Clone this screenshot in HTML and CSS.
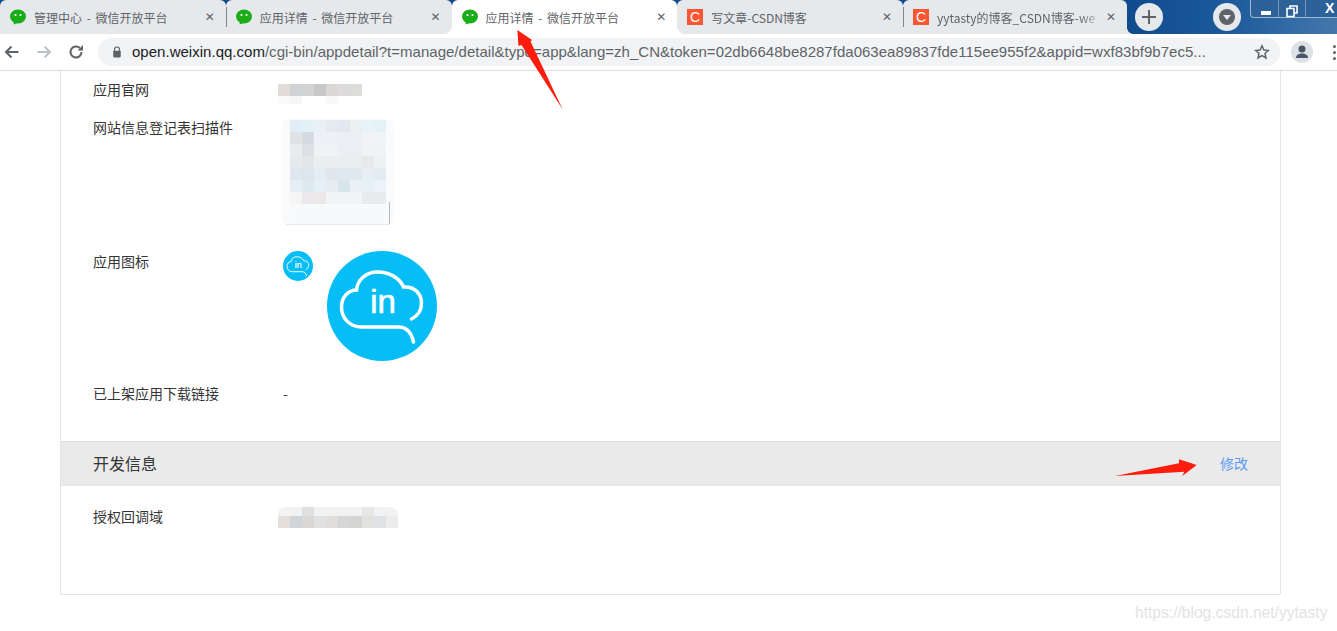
FILE: index.html
```html
<!DOCTYPE html>
<html lang="zh-CN">
<head>
<meta charset="utf-8">
<title>应用详情 - 微信开放平台</title>
<link rel="stylesheet" href="styles.css">
</head>
<body>
<header class="chrome">
  <div class="tabstrip">
    <div class="tab">
      <svg class="fav" viewBox="0 0 16 16"><use href="#wechat"/></svg>
      <span class="tab-title">管理中心 - 微信开放平台</span><span class="close">✕</span>
    </div>
    <div class="tab sep before-active">
      <svg class="fav" viewBox="0 0 16 16"><use href="#wechat"/></svg>
      <span class="tab-title">应用详情 - 微信开放平台</span><span class="close">✕</span>
    </div>
    <div class="tab active">
      <svg class="fav" viewBox="0 0 16 16"><use href="#wechat"/></svg>
      <span class="tab-title">应用详情 - 微信开放平台</span><span class="close">✕</span>
    </div>
    <div class="tab after-active">
      <svg class="fav" viewBox="0 0 16 16"><use href="#csdn"/></svg>
      <span class="tab-title">写文章-CSDN博客</span><span class="close">✕</span>
    </div>
    <div class="tab sep last">
      <svg class="fav" viewBox="0 0 16 16"><use href="#csdn"/></svg>
      <span class="tab-title fade">yytasty的博客_CSDN博客-we</span><span class="close">✕</span>
    </div>
    <div class="newtab"><svg viewBox="0 0 28 28" width="28" height="28"><path d="M14 7v14M7 14h14" stroke="#5f6368" stroke-width="2" fill="none"/></svg></div>
    <div class="profile"><svg viewBox="0 0 28 28" width="28" height="28"><circle cx="14" cy="14" r="14" fill="#e6e9ec"/><circle cx="14" cy="14" r="8" fill="#5f6368"/><path d="M10 12h8l-4 5z" fill="#e6e9ec"/></svg></div>
    <div class="winbtns">
      <span class="winbtn"><svg viewBox="0 0 28 16" width="28" height="16"><rect x="10" y="8" width="10" height="4" fill="#fff"/></svg></span>
      <span class="winbtn"><svg viewBox="0 0 27 16" width="27" height="16"><path d="M11 5V3h7v7h-3M8 5.500h7v8H8z" fill="none" stroke="#fff" stroke-width="1.600"/></svg></span>
      <span class="winbtn wide"><span class="x">X</span></span>
    </div>
  </div>
  <div class="toolbar">
    <svg class="navicon" viewBox="0 0 16 16"><path d="M14.500 8H2M7.500 2.500 2 8l5.500 5.500" fill="none" stroke="#5f6368" stroke-width="2"/></svg>
    <svg class="navicon off" viewBox="0 0 16 16"><path d="M1.500 8H14M8.500 2.500 14 8l-5.500 5.500" fill="none" stroke="#bdc1c6" stroke-width="2"/></svg>
    <svg class="navicon" viewBox="0 0 16 16"><path d="M13.500 8A5.500 5.500 0 1 1 11.800 4" fill="none" stroke="#5f6368" stroke-width="2"/><path d="M9.500 6.500H15V1z" fill="#5f6368"/></svg>
    <div class="omnibox">
      <svg class="lock" viewBox="0 0 12 14"><path d="M3 6V4a3 3 0 0 1 6 0v2" fill="none" stroke="#5f6368" stroke-width="1.400"/><rect x="1.500" y="5.500" width="9" height="8" rx="1" fill="#5f6368"/></svg>
      <span class="url"><b>open.weixin.qq.com</b>/cgi-bin/appdetail?t=manage/detail&amp;type=app&amp;lang=zh_CN&amp;token=02db6648be8287fda063ea89837fde115ee955f2&amp;appid=wxf83bf9b7ec5...</span>
      <svg class="star" viewBox="0 0 16 16"><path d="m8 1.800 1.900 4.200 4.500.5-3.400 3 1 4.500L8 11.700 4 14l1-4.500-3.400-3 4.500-.5z" fill="none" stroke="#5f6368" stroke-width="1.500"/></svg>
    </div>
    <svg class="avatar" viewBox="0 0 22 22"><circle cx="11" cy="11" r="11" fill="#dee1e6"/><circle cx="11" cy="8" r="3.500" fill="#4a5568"/><path d="M5 17c0-3 2.500-4.500 6-4.500s6 1.500 6 4.500z" fill="#4a5568"/></svg>
    <div class="menu"><i></i><i></i><i></i></div>
  </div>
</header>

<main class="page">
  <section class="card">
    <div class="row row-site">
      <div class="label">应用官网</div>
      <svg class="mosaic mosaic-site" width="90" height="22" viewBox="0 0 90 22">
        <rect x="0" y="0" width="12" height="12" fill="#e2dcd7"/><rect x="12" y="0" width="12" height="12" fill="#cfd3d6"/><rect x="24" y="0" width="12" height="12" fill="#d3d3d3"/><rect x="36" y="0" width="12" height="12" fill="#c7c8ca"/><rect x="48" y="0" width="12" height="12" fill="#d9d8d4"/><rect x="60" y="0" width="12" height="12" fill="#dcdadb"/><rect x="72" y="0" width="12" height="12" fill="#dcdcda"/>
        <rect x="0" y="12" width="12" height="8" fill="#fafafa"/><rect x="12" y="12" width="12" height="8" fill="#f3f5f6"/><rect x="48" y="12" width="12" height="8" fill="#f9f9f9"/>
      </svg>
    </div>
    <div class="row row-qr">
      <div class="label">网站信息登记表扫描件</div>
      <svg class="mosaic mosaic-qr" width="116" height="110" viewBox="0 0 116 110">
        <rect x="0" y="2" width="112" height="106" rx="8" fill="#f8fafb"/>
        <rect x="8" y="3" width="12" height="12" fill="#e2eef7"/><rect x="20" y="3" width="12" height="12" fill="#e3f0f8"/><rect x="32" y="3" width="12" height="12" fill="#e8f0f5"/><rect x="44" y="3" width="12" height="12" fill="#e4eaef"/><rect x="56" y="3" width="12" height="12" fill="#e2e7f0"/><rect x="68" y="3" width="12" height="12" fill="#ebf0f3"/><rect x="80" y="3" width="12" height="12" fill="#e7f2f9"/><rect x="92" y="3" width="12" height="12" fill="#e5f1f9"/>
        <rect x="8" y="15" width="12" height="12" fill="#dfe3e6"/><rect x="20" y="15" width="12" height="12" fill="#d5dce1"/><rect x="32" y="15" width="24" height="12" fill="#edf1f5"/><rect x="56" y="15" width="24" height="12" fill="#eceff3"/><rect x="80" y="15" width="24" height="12" fill="#f1f4f7"/>
        <rect x="8" y="27" width="12" height="12" fill="#e8ecef"/><rect x="20" y="27" width="12" height="12" fill="#dce1e5"/><rect x="32" y="27" width="24" height="12" fill="#eff3f6"/><rect x="56" y="27" width="24" height="12" fill="#ebeff3"/><rect x="80" y="27" width="24" height="12" fill="#f0f2f6"/>
        <rect x="8" y="39" width="12" height="12" fill="#e6eaed"/><rect x="20" y="39" width="12" height="12" fill="#e2e6e9"/><rect x="32" y="39" width="48" height="12" fill="#ebeef1"/><rect x="80" y="39" width="12" height="12" fill="#e7eaed"/><rect x="92" y="39" width="12" height="12" fill="#eef0f3"/>
        <rect x="8" y="51" width="12" height="12" fill="#dfe7f1"/><rect x="20" y="51" width="12" height="12" fill="#dde6ee"/><rect x="32" y="51" width="12" height="12" fill="#e3edf3"/><rect x="44" y="51" width="12" height="12" fill="#dfe7ed"/><rect x="56" y="51" width="24" height="12" fill="#dee8ee"/><rect x="80" y="51" width="12" height="12" fill="#e6eef3"/><rect x="92" y="51" width="12" height="12" fill="#e4ecf3"/>
        <rect x="8" y="63" width="12" height="12" fill="#e6edf3"/><rect x="20" y="63" width="12" height="12" fill="#deeaf1"/><rect x="32" y="63" width="12" height="12" fill="#e5f0f6"/><rect x="44" y="63" width="12" height="12" fill="#e5edf2"/><rect x="56" y="63" width="12" height="12" fill="#d9e5ec"/><rect x="68" y="63" width="12" height="12" fill="#e9f1f5"/><rect x="80" y="63" width="12" height="12" fill="#e6f0f5"/><rect x="92" y="63" width="12" height="12" fill="#ebf3f8"/>
        <rect x="8" y="75" width="12" height="12" fill="#f5f5f5"/><rect x="20" y="75" width="12" height="12" fill="#ebe7ea"/><rect x="32" y="75" width="12" height="12" fill="#ece8ea"/><rect x="44" y="75" width="36" height="12" fill="#f2f4f5"/><rect x="80" y="75" width="24" height="12" fill="#e9eaec"/>
        <rect x="8" y="87" width="96" height="20" fill="#f7f9fa"/>
        <rect x="107" y="85" width="1" height="23" fill="#b5b5b5"/><rect x="4" y="107" width="104" height="1" fill="#e9e9e9"/>
      </svg>
    </div>
    <div class="row row-icon">
      <div class="label">应用图标</div>
      <div class="icons">
        <svg class="appicon small" viewBox="0 0 110 110"><use href="#inlogo"/></svg>
        <svg class="appicon large" viewBox="0 0 110 110"><use href="#inlogo"/></svg>
      </div>
    </div>
    <div class="row row-link">
      <div class="label">已上架应用下载链接</div>
      <div class="value">-</div>
    </div>
    <div class="section-head">
      <h2 class="section-title">开发信息</h2>
      <a class="edit">修改</a>
    </div>
    <div class="row row-domain">
      <div class="label">授权回调域</div>
      <svg class="mosaic mosaic-domain" width="120" height="21" viewBox="0 0 120 21">
        <path d="M0 9V8q0-8 8-8h102q10 0 10 9z" fill="#f2f2f2"/><rect x="24" y="0" width="12" height="9" fill="#e0e0e0"/><rect x="84" y="0" width="12" height="9" fill="#e6e6e6"/>
        <rect x="0" y="9" width="12" height="12" fill="#e4dfdb"/><rect x="12" y="9" width="12" height="12" fill="#d0d5d9"/><rect x="24" y="9" width="12" height="12" fill="#dad8d6"/><rect x="36" y="9" width="12" height="12" fill="#dfe1e3"/><rect x="48" y="9" width="12" height="12" fill="#e0dedb"/><rect x="60" y="9" width="12" height="12" fill="#d5d6d6"/><rect x="72" y="9" width="12" height="12" fill="#d4d4d3"/><rect x="84" y="9" width="12" height="12" fill="#e3e1e0"/><rect x="96" y="9" width="12" height="12" fill="#dfe2e5"/><rect x="108" y="9" width="12" height="12" fill="#ececec"/>
      </svg>
    </div>
  </section>
</main>

<svg class="arrow arrow-tab" width="80" height="95" viewBox="0 0 80 95"><path d="M17.300 10 32 20l-1.500 1.500 32.200 68L21.500 25l-3 1z" fill="#fe1c0c"/></svg>
<svg class="arrow arrow-edit" width="100" height="35" viewBox="0 0 100 35"><path d="M10 26 74 13.300l0-4 17.700 5.700-14.400 11 2-4.300z" fill="#fe1c0c"/></svg>
<div class="watermark">https://blog.csdn.net/yytasty</div>

<svg class="defs" width="0" height="0">
  <defs>
    <g id="wechat">
      <ellipse cx="8" cy="7.500" rx="8" ry="7" fill="#1aad19"/><path d="M4 12l-.5 3.500L7.500 14z" fill="#1aad19"/>
      <circle cx="5.500" cy="6" r="1.100" fill="#fff"/><circle cx="10.500" cy="6" r="1.100" fill="#fff"/>
    </g>
    <g id="csdn">
      <rect width="16" height="16" fill="#fc5531"/>
      <text x="8" y="13" text-anchor="middle" font-family="Liberation Sans, sans-serif" font-size="14" fill="#fff">C</text>
    </g>
    <g id="inlogo">
      <circle cx="55" cy="55" r="55" fill="#06bdf6"/>
      <path d="M84.500 68c6-3 10-9 10-16 0-10-8-17-18-16-4-9-14-15-26-15-12 0-20 8-21 18-9 0-15 8-15 17 0 11 8 20 20 20h37c8 0 13 6 15 15" fill="none" stroke="#fff" stroke-width="3.500" stroke-linecap="round"/>
      <text x="56" y="62" text-anchor="middle" font-family="Liberation Sans, sans-serif" font-size="33" stroke="#fff" stroke-width=".6" fill="#fff">in</text>
    </g>
  </defs>
</svg>
</body>
</html>
```

FILE: styles.css
```css
* { box-sizing: border-box; }
html, body { margin: 0; height: 631px; overflow: hidden; background: #fff; }
body { position: relative; font-family: "Noto Sans CJK SC", "Liberation Sans", sans-serif; color: #333; }

.chrome { border-bottom: 1px solid #dadce0; background: #fff; }
.tabstrip {
  height: 34px; display: flex; align-items: stretch;
  background: linear-gradient(95deg, #0f4a8c 0%, #0f4a8c 84%, #1d5b9c 92%, #4478ac 100%);
}
.tab {
  width: 225.750px; flex: none; display: flex; align-items: center; position: relative;
  padding: 0 10px 0 10px; background: #e6e9ec; font-size: 12px; color: #5f6368;
  border-radius: 6px 6px 0 0; z-index: 1;
}
.tab.sep::before { content: ""; position: absolute; left: 0; top: 7px; bottom: 7px; width: 1px; background: #80868b; }
.tab.active { background: #fff; z-index: 0; }
.tab.active::before, .tab.active::after { content: ""; position: absolute; bottom: 0; width: 10px; height: 10px; background: #fff; }
.tab.active::before { left: -10px; }
.tab.active::after { right: -10px; }
.tab.before-active { border-bottom-right-radius: 8px; }
.tab.after-active { border-bottom-left-radius: 8px; }
.tab.last { width: 224px; }
.tab.last::after {
  content: ""; position: absolute; right: -6px; bottom: 0; width: 6px; height: 6px;
  background: radial-gradient(circle at 100% 0, transparent 5.500px, #e6e9ec 6px);
}
.fav { width: 16px; height: 16px; flex: none; }
.tab-title { flex: 1; margin-left: 8px; white-space: nowrap; overflow: hidden; word-spacing: 2px; }
.tab-title.fade { -webkit-mask-image: linear-gradient(90deg, #000 88%, #0005); mask-image: linear-gradient(90deg, #000 88%, #0005); }
.close { width: 12px; flex: none; font-size: 12px; line-height: 14px; font-family: "DejaVu Sans", sans-serif; color: #5f6368; text-align: center; margin-left: 8px; }
.newtab, .profile { flex: none; align-self: flex-start; margin-top: 3px; height: 28px; }
.newtab { width: 28px; border-radius: 50%; background: #e6e9ec; margin-left: 8px; }
.profile { margin-left: 50px; }
.winbtns {
  margin-left: auto; align-self: flex-start; height: 18px; display: flex; width: 87px;
  border: 1px solid #9db9d6; border-top: 0; border-right: 0; border-radius: 0 0 0 4px; background: #2d6299;
}
.winbtn { width: 28px; border-right: 1px solid #6f95bc; }
.winbtn + .winbtn { width: 27px; }
.winbtn.wide { width: 31px; border: 0; }
.x { display: block; color: #fff; font: bold 14px/17px "Liberation Sans", sans-serif; padding-left: 19px; }

.toolbar { height: 36px; display: flex; align-items: center; padding: 0 0 0 4px; background: #fff; }
.navicon { width: 16px; height: 16px; flex: none; margin-right: 16px; }
.omnibox {
  margin-left: -2px; width: 1182px; height: 28px; flex: none; background: #f1f3f4; border-radius: 14px;
  display: flex; align-items: center; padding: 0 10px 0 14px;
}
.lock { width: 10px; height: 12px; flex: none; margin-right: 10px; }
.url { flex: 1; font: 15px/28px "Liberation Sans", sans-serif; color: #5f6368; white-space: nowrap; overflow: hidden; letter-spacing: .02px; }
.url b { font-weight: 400; color: #202124; }
.star { width: 16px; height: 16px; flex: none; }
.avatar { width: 22px; height: 22px; flex: none; margin-left: 11px; }
.menu { margin-left: 20px; display: flex; flex-direction: column; gap: 3px; }
.menu i { display: block; width: 3px; height: 3px; border-radius: 50%; background: #5f6368; }

.page { padding: 0 56px 0 60px; }
.card { width: 1221px; height: 524px; border: 1px solid #e4e4e4; border-top: 0; border-radius: 0 0 2px 2px; }
.row { display: grid; grid-template-columns: 190px 1fr; padding-left: 32px; font-size: 14px; }
.label { line-height: 20px; color: #353535; white-space: nowrap; }
.value { line-height: 20px; }
.row-site { height: 38px; padding-top: 8px; }
.row-qr { height: 134px; padding-top: 8px; }
.mosaic-qr { margin-top: 0; margin-left: -1px; }
.row-icon { height: 132px; padding-top: 8px; }
.row-link { height: 66px; padding-top: 8px; align-items: start; }
.mosaic { display: block; }
.mosaic-site { margin: 5px 0 0 -5px; }
.mosaic-domain { margin: 1px 0 0 -5px; }
.icons { display: flex; align-items: flex-start; }
.appicon { display: block; flex: none; }
.small { width: 30px; height: 30px; }
.large { width: 110px; height: 110px; margin-left: 14px; }

.section-head {
  height: 45px; display: flex; align-items: center; justify-content: space-between;
  padding: 0 32px 2px; background: #eaeaea; border-top: 1px solid #dedede;
}
.section-title { margin: 0; font-size: 16px; font-weight: 400; color: #353535; }
.edit { font-size: 14px; color: #5b9bf0; }
.row-domain { padding-top: 20px; }

.arrow { position: absolute; }
.arrow-tab { left: 500px; top: 20px; }
.arrow-edit { left: 1105px; top: 450px; }
.watermark {
  position: absolute; left: 1135px; top: 603px; font: 15.600px/20px "Liberation Sans", sans-serif;
  color: #e3e3e3; white-space: nowrap;
}
.defs { position: absolute; }
```
